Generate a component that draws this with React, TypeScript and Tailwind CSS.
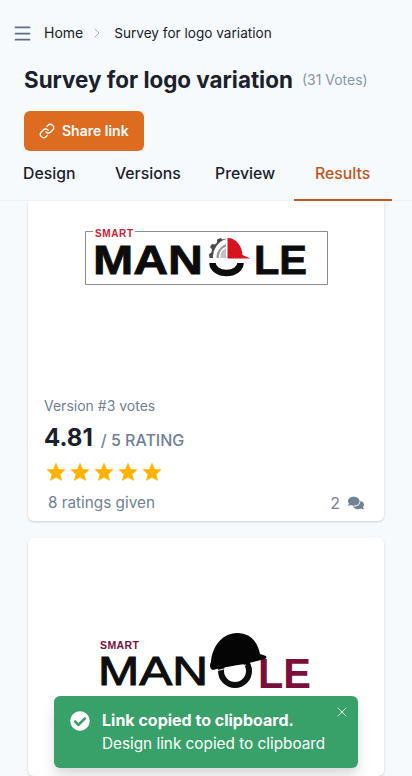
import { Link, Menu, ChevronRight, X } from 'lucide-react';
import { FaComments, FaCheckCircle } from 'react-icons/fa';

const TABS = [
  { label: 'Design', width: 'w-[92px]' },
  { label: 'Versions', width: 'w-[100px]' },
  { label: 'Preview', width: 'w-[102px]' },
];

function Star() {
  return (
    <svg className="w-5 h-5" viewBox="0 0 20 20">
      <polygon points="10,0.6 12.7,7 19.6,7.6 14.4,12.2 16,19 10,15.4 4,19 5.600,12.200 0.400,7.600 7.300,7" fill="currentColor" />
    </svg>
  );
}

// logo drawings use page coordinates through their viewBox, letters stay real text
function RedLogo() {
  return (
    <svg className="block w-[356px] h-[195px]" viewBox="28 200 356 195">
      <path d="M93 230.500H85.500V283.500H327.500V230.500H135" fill="none" stroke="#8c8c8c" strokeWidth="1" />
      <text x="95" y="235.500" fontSize="10" fontWeight="700" fill="#d0202e" textLength="38" fontFamily="Liberation Sans, sans-serif">SMART</text>
      <text x="93" y="272.500" fontSize="41" fontWeight="700" fill="#0c0c0c" textLength="110" lengthAdjust="spacingAndGlyphs" stroke="#0c0c0c" strokeWidth="0.800" fontFamily="Liberation Sans, sans-serif">MAN</text>
      <text x="254" y="272.500" fontSize="41" fontWeight="700" fill="#0c0c0c" textLength="53" lengthAdjust="spacingAndGlyphs" stroke="#0c0c0c" strokeWidth="0.800" fontFamily="Liberation Sans, sans-serif">LE</text>
      <path d="M212.500 262a14 10 0 0 0 28 0" fill="none" stroke="#0c0c0c" strokeWidth="6.500" />
      <path d="M226 238a19 19 0 0 0-13 19h-3.500l-.5-4 2.500-1.500 .5-3-2-2.500 2-3 3 .5 2-2 0-3 3.500-1.500 2 1.500 3.500-1z" fill="#4b4b4b" />
      <path d="M226 243a14 14 0 0 0-9.500 14h2.500a11 11 0 0 1 7-11.500z" fill="#9a9a9a" />
      <path d="M226 247a10 10 0 0 0-5.500 10h5.500z" fill="#c4c4c4" />
      <path d="M227.500 237c9 0 14.500 8 15 17l8 3.500h-23z" fill="#d5141f" />
    </svg>
  );
}

function MaroonLogo() {
  return (
    <svg className="block w-[356px] h-[238px]" viewBox="28 538 356 238">
      <text x="100" y="649" fontSize="10.500" fontWeight="700" fill="#7a0f3c" textLength="39" fontFamily="Liberation Sans, sans-serif">SMART</text>
      <text x="98" y="685" fontSize="40" fontWeight="400" fill="#0d0d0d" textLength="110" lengthAdjust="spacingAndGlyphs" stroke="#0d0d0d" strokeWidth="1" fontFamily="Liberation Sans, sans-serif">MAN</text>
      <text x="258" y="687.500" fontSize="43" fontWeight="700" fill="#7a0f3c" textLength="53" lengthAdjust="spacingAndGlyphs" fontFamily="Liberation Sans, sans-serif">LE</text>
      <circle cx="235" cy="671" r="14" fill="none" stroke="#0d0d0d" strokeWidth="6" />
      <path d="M213 670c-3-1-4-5-2-8 1-15 11-29 26-29 14 0 21 10 23 21l6 2c1 1 0 3-1 3l-20 5c-12 2-22 3-32 6z" fill="#050505" />
      <path d="M216 671c10-3 20-4 30-6" fill="none" stroke="#ffffff" strokeWidth="1" />
    </svg>
  );
}

export default function App() {
  return (
    <div className="relative flex flex-col w-[412px] h-[776px] overflow-hidden bg-[#f7fafc] font-['Inter',sans-serif] text-[#1a202c]">
      <div className="flex items-center h-[66px] pl-3 text-[13.6px]">
        <Menu className="w-[21px] h-[21px] text-[#5f6c85]" strokeWidth={2} />
        <span className="ml-[11px] text-sm">Home</span>
        <ChevronRight className="w-4 h-4 ml-[6px] text-[#a0aec0]" strokeWidth={1.5} />
        <span className="ml-[9px]">Survey for logo variation</span>
      </div>

      <div className="flex items-center h-[28px] pl-6">
        <h1 className="text-[22.4px] font-bold">Survey for logo variation</h1>
        <span className="ml-[9px] text-sm text-[#8a94a6]">(31 Votes)</span>
      </div>

      <div className="pl-6 pt-[17px]">
        <button className="flex items-center h-10 w-[120px] pl-[15px] rounded-md bg-[#dd6b20] text-sm font-semibold text-white">
          <Link className="w-4 h-4 mr-[7px]" strokeWidth={2} />
          Share link
        </button>
      </div>

      <div className="flex h-[50px] border-b border-[#edf2f7]">
        {TABS.map((tab) => (
          <div key={tab.label} className={`${tab.width} pl-[23px] pt-[11px] text-[15.8px] font-medium`}>
            {tab.label}
          </div>
        ))}
        <div className="w-[98px] h-[50px] border-b-2 border-[#c05621] pl-[21px] pt-[11px] text-[15.8px] font-medium text-[#c05621]">
          Results
        </div>
      </div>

      <main className="flex-1 overflow-hidden px-7">
        <div className="bg-white rounded-b-md shadow-[0_1px_3px_rgba(0,0,0,0.12),0_1px_2px_rgba(0,0,0,0.06)] pb-[6px]">
          <RedLogo />
          <div className="pl-4 pr-5">
            <p className="text-sm leading-5 text-[#718096]">Version #3 votes</p>
            <div className="flex items-baseline mt-[6px] h-9">
              <span className="text-2xl font-bold">4.81</span>
              <span className="ml-2 text-base font-medium text-[#718096]">/ 5 RATING</span>
            </div>
            <div className="flex gap-1 mt-1 ml-[2px] text-[#ffb400]">
              <Star />
              <Star />
              <Star />
              <Star />
              <Star />
            </div>
            <div className="flex items-center justify-between mt-[9px] ml-1 text-[#718096]">
              <span className="text-[15.3px] leading-6">8 ratings given</span>
              <span className="flex items-center gap-2 text-base">
                2
                <FaComments className="w-4 h-4" />
              </span>
            </div>
          </div>
        </div>

        <div className="mt-[17px] bg-white rounded-md shadow-[0_1px_3px_rgba(0,0,0,0.12),0_1px_2px_rgba(0,0,0,0.06)]">
          <MaroonLogo />
        </div>
      </main>

      <div className="absolute left-[54px] top-[696px] flex w-[304px] h-[72px] pl-4 pt-3 rounded-md bg-[#38a169] text-white shadow-[0_10px_15px_rgba(0,0,0,0.1),0_4px_6px_rgba(0,0,0,0.05)]">
        <FaCheckCircle className="w-5 h-5 mt-[3px] shrink-0" />
        <div className="ml-3">
          <p className="text-base font-bold leading-6">Link copied to clipboard.</p>
          <p className="text-[15.3px] leading-6">Design link copied to clipboard</p>
        </div>
        <X className="absolute top-2 right-2 w-[16px] h-[16px]" strokeWidth={1.25} />
      </div>
    </div>
  );
}
